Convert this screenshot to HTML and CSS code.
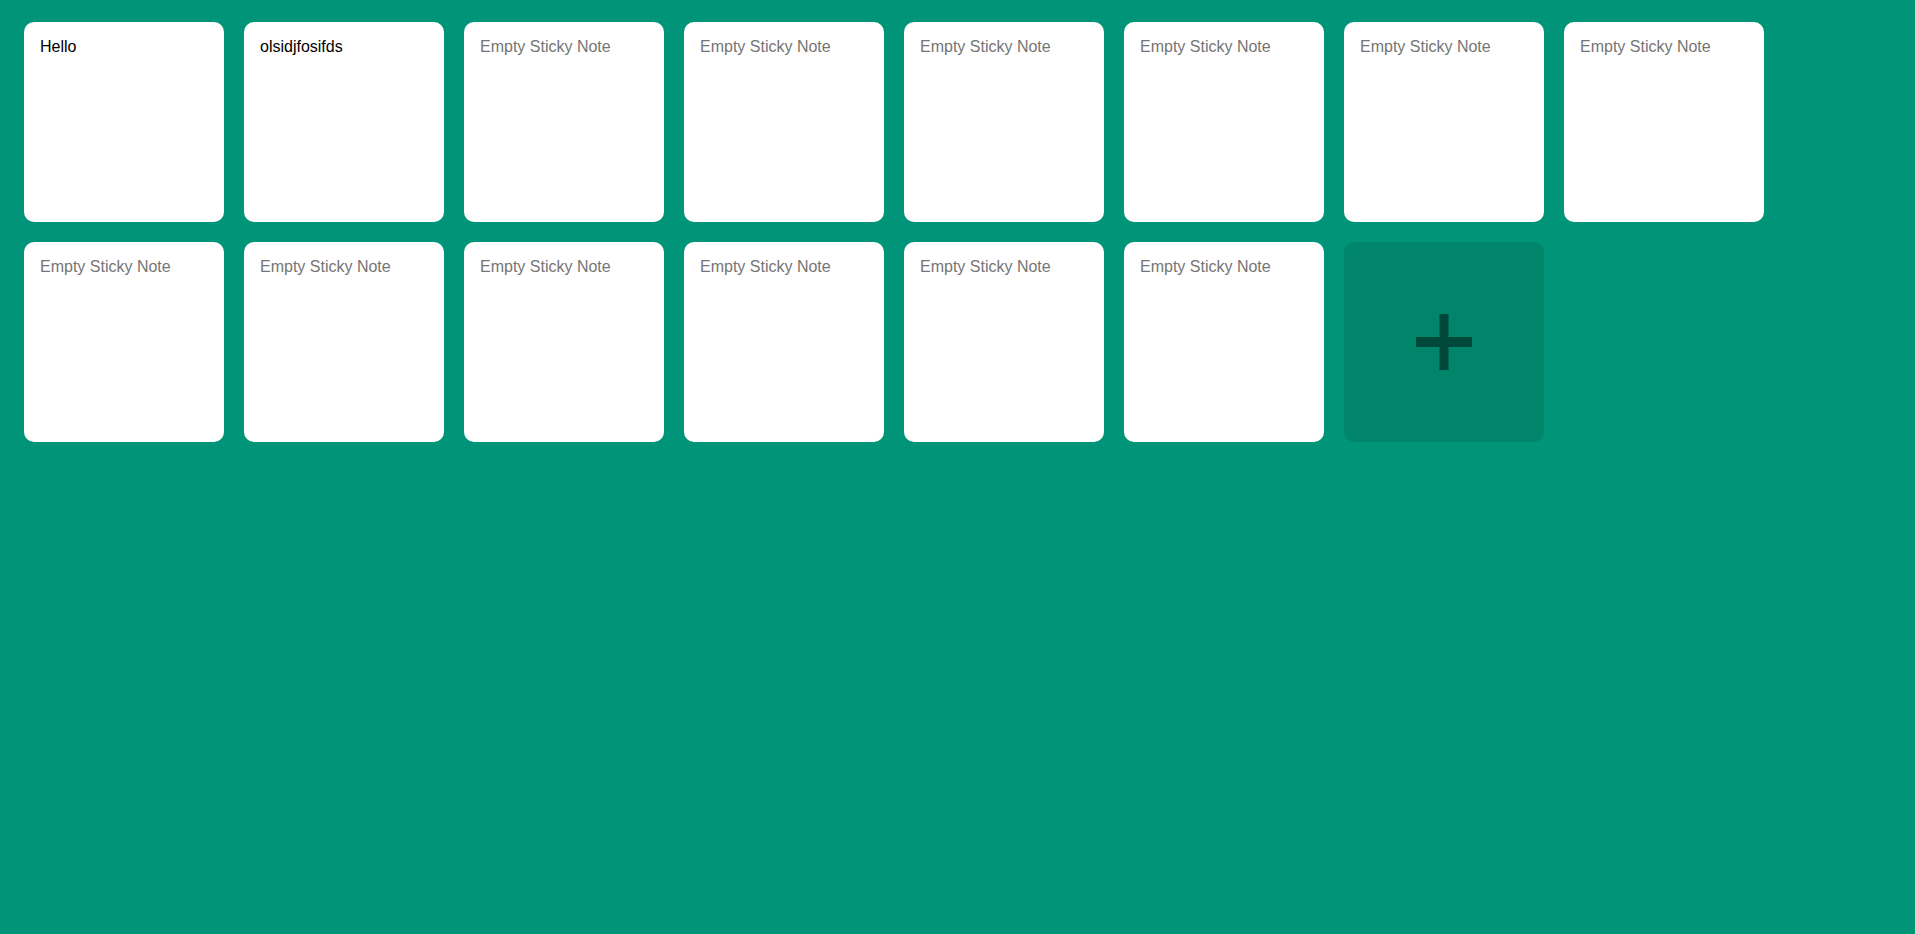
FILE: index.html
```html
<!DOCTYPE html>
<html lang="en">
<head>
<meta charset="utf-8">
<title>Sticky Notes</title>
<link rel="stylesheet" href="styles.css">
</head>
<body>
<div class="notes">
  <textarea class="note" placeholder="Empty Sticky Note">Hello</textarea>
  <textarea class="note" placeholder="Empty Sticky Note">olsidjfosifds</textarea>
  <textarea class="note" placeholder="Empty Sticky Note"></textarea>
  <textarea class="note" placeholder="Empty Sticky Note"></textarea>
  <textarea class="note" placeholder="Empty Sticky Note"></textarea>
  <textarea class="note" placeholder="Empty Sticky Note"></textarea>
  <textarea class="note" placeholder="Empty Sticky Note"></textarea>
  <textarea class="note" placeholder="Empty Sticky Note"></textarea>
  <textarea class="note" placeholder="Empty Sticky Note"></textarea>
  <textarea class="note" placeholder="Empty Sticky Note"></textarea>
  <textarea class="note" placeholder="Empty Sticky Note"></textarea>
  <textarea class="note" placeholder="Empty Sticky Note"></textarea>
  <textarea class="note" placeholder="Empty Sticky Note"></textarea>
  <textarea class="note" placeholder="Empty Sticky Note"></textarea>
  <button class="add-note" type="button" aria-label="Add note">
    <svg class="plus" width="56" height="56" viewBox="0 0 56 56">
      <rect x="23.5" y="0" width="9" height="56" fill="#00483a"/>
      <rect x="0" y="23" width="56" height="10" fill="#00483a"/>
    </svg>
  </button>
</div>
</body>
</html>
```
FILE: styles.css
```css
html, body {
  margin: 0;
  padding: 0;
  height: 100%;
}

body {
  background: #009578;
  font-family: "Liberation Sans", Arial, sans-serif;
}

.notes {
  display: flex;
  flex-wrap: wrap;
  gap: 20px;
  padding: 22px 24px;
  width: 1760px;
}

.note {
  display: block;
  box-sizing: border-box;
  width: 200px;
  height: 200px;
  margin: 0;
  padding: 16px;
  border: none;
  border-radius: 10px;
  background: #ffffff;
  color: #000000;
  font-family: "Liberation Sans", Arial, sans-serif;
  font-size: 16px;
  line-height: normal;
  resize: none;
  outline: none;
  overflow: hidden;
}

.note::placeholder {
  color: #757575;
}

.add-note {
  display: flex;
  align-items: center;
  justify-content: center;
  width: 200px;
  height: 200px;
  margin: 0;
  padding: 0;
  border: none;
  border-radius: 10px;
  background: rgba(0, 0, 0, 0.1);
  cursor: pointer;
}

.plus {
  display: block;
}
```
